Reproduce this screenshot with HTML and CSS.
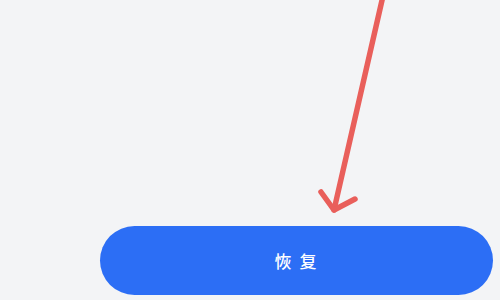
FILE: index.html
```html
<!DOCTYPE html>
<html>
<head>
  <meta charset="UTF-8" />
  <meta name="viewport" content="width=device-width, initial-scale=1.0" />
  <title>恢复</title>
  <link rel="stylesheet" href="styles.css">
</head>
<body>
  <div class="screen">
    <!-- annotation arrow pointing at the button -->
    <svg class="arrow" width="500" height="300" viewBox="0 0 500 300">
      <g fill="none" stroke="#e95f5b" stroke-width="5.5" stroke-linecap="round" stroke-linejoin="round">
        <path d="M383 -4 L334 210" />
        <path d="M321 192 L334 210 L355 199" />
      </g>
    </svg>
    <div class="actions">
      <button class="restore-button">恢复</button>
    </div>
  </div>
</body>
</html>
```

FILE: styles.css
```css
html, body {
  margin: 0;
  padding: 0;
}
body {
  background-color: #f3f4f6;
  font-family: "Noto Sans CJK SC", "Noto Sans", sans-serif;
}
.screen {
  position: relative;
  width: 500px;
  height: 300px;
  overflow: hidden;
  display: flex;
  flex-direction: column;
  justify-content: flex-end;
}
.arrow {
  position: absolute;
  left: 0;
  top: 0;
}
.actions {
  padding: 0 7px 5px 100px;
}
.restore-button {
  width: 100%;
  height: 69px;
  border: none;
  border-radius: 35px;
  background-color: #2c6ef5;
  color: #ffffff;
  font-family: "Noto Sans CJK SC", sans-serif;
  font-size: 17px;
  font-weight: 500;
  letter-spacing: 8px;
  text-indent: 6px;
  padding: 0;
  cursor: pointer;
}
```
